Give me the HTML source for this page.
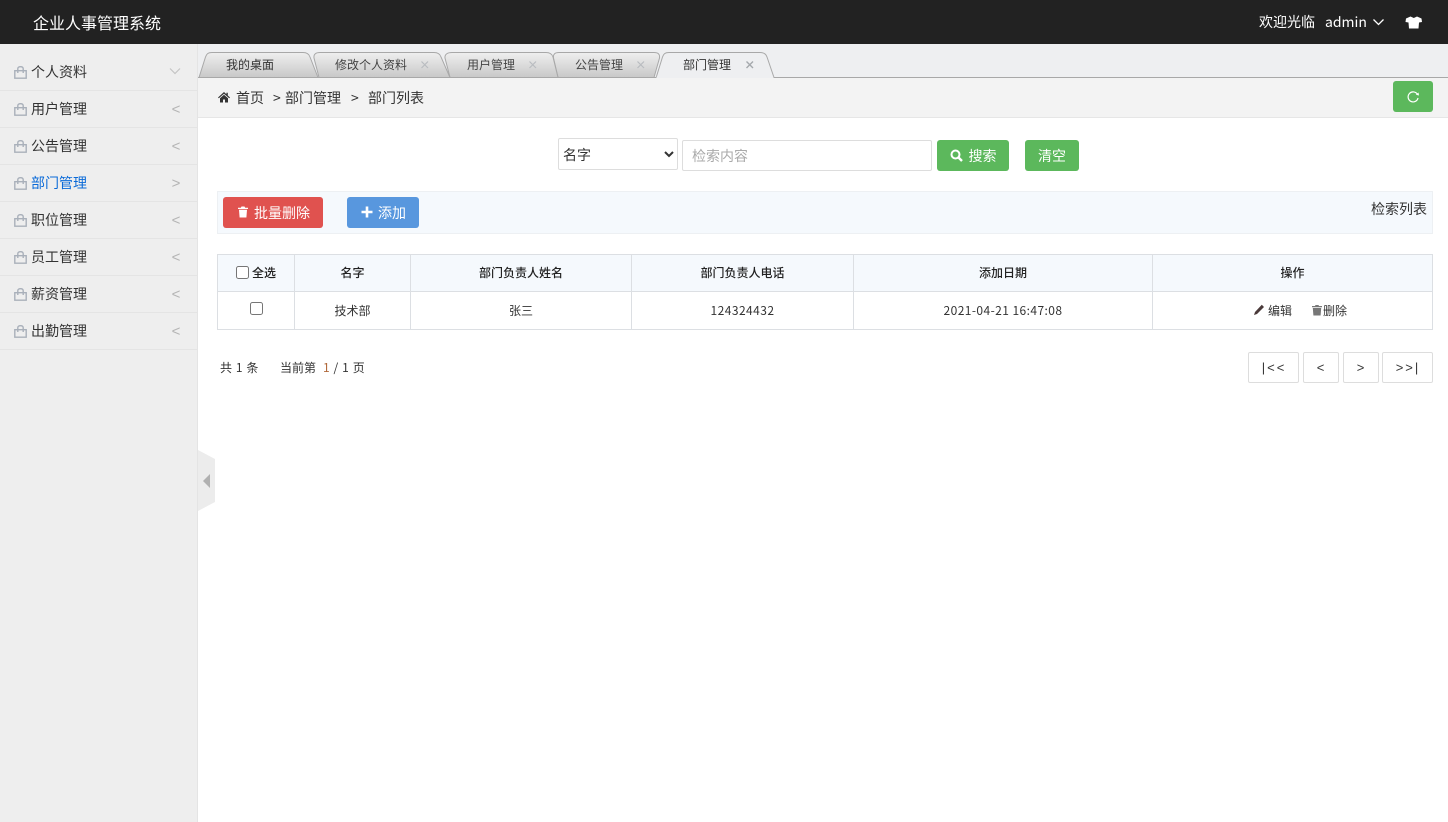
<!DOCTYPE html>
<html lang="zh"><head><meta charset="utf-8"><title>企业人事管理系统</title>
<style>
*{box-sizing:border-box}
html,body{margin:0;padding:0;width:1448px;height:822px;overflow:hidden;background:#fff}
body{position:relative;font-family:"Liberation Sans","Noto Sans CJK SC",sans-serif;color:#333;font-size:12px}
.a{position:absolute;white-space:nowrap}
.t{position:absolute;white-space:nowrap;font-family:"Noto Sans CJK SC","Liberation Sans",sans-serif;line-height:20px;height:20px}
.c{text-align:center}
.btn{position:absolute;border-radius:3px;color:#fff;font-family:"Noto Sans CJK SC",sans-serif;font-size:14px;line-height:31px;text-align:center;white-space:nowrap}
.item{position:absolute;left:0;width:197px;height:37px;border-bottom:1px solid #e4e4e4}
.item span{position:absolute;left:31px;top:8px;font:14px/20px "Noto Sans CJK SC",sans-serif;color:#333}
.item svg{position:absolute;left:14px;top:12px}
.item i{position:absolute;left:171px;top:9px;font:normal 15px/20px "Liberation Sans",sans-serif;color:#b4b4b4;width:10px;text-align:center}
.pg{position:absolute;top:352px;height:31px;border:1px solid #ddd;border-radius:2px;background:#fff;text-align:center;font:13px/29px "Liberation Sans",sans-serif;color:#333;letter-spacing:2px;padding-left:1px}
.v{position:absolute;top:254px;width:1px;height:76px;background:#dcdfe3}
.h{position:absolute;left:217px;width:1216px;height:1px;background:#dcdfe3}
input[type=checkbox]{position:absolute;margin:0;width:13px;height:13px}
</style></head><body>

<div class="a" style="left:0;top:0;width:1448px;height:44px;background:#222"></div>
<div class="t" style="left:33px;top:12px;color:#fff;font-size:16px">企业人事管理系统</div>
<div class="t" style="left:1259px;top:12px;color:#fff;font-size:14px">欢迎光临</div>
<div class="t" style="left:1325px;top:12px;color:#fff;font-size:14px">admin</div>
<svg class="a" style="left:1372px;top:18px" width="13" height="9" viewBox="0 0 13 9"><path d="M1.500 1.500L6.500 6.500L11.500 1.500" fill="none" stroke="#fff" stroke-width="1.300"/></svg>
<svg class="a" style="left:1405px;top:16px" width="18" height="13" viewBox="0 0 18 13"><path d="M5.500 0.500L1 2.500L0.500 6L3.500 6.500L4 12.500H13.500L14 6.500L17 6L16.500 2.500L12 0.500L8.800 2Z" fill="#fff"/></svg>

<!-- sidebar -->
<div class="a" style="left:0;top:44px;width:198px;height:778px;background:#eee;border-right:1px solid #e4e4e4"></div>
<div class="item" style="top:54px"><svg width="13" height="13" viewBox="0 0 13 13"><path d="M.8 4.700H12.200V12.200H.8ZM3.800 7V2.800C3.800 1.200 5 .7 6.500 .7S9.200 1.200 9.200 2.800V7" fill="none" stroke="#a9b0ba" stroke-width="1.400"/></svg><span>个人资料</span><svg style="left:169px;top:13px" width="12" height="8" viewBox="0 0 12 8"><path d="M1 1.500L6 6.500L11 1.500" fill="none" stroke="#c4c4c4" stroke-width="1.200"/></svg></div>
<div class="item" style="top:91px"><svg width="13" height="13" viewBox="0 0 13 13"><path d="M.8 4.700H12.200V12.200H.8ZM3.800 7V2.800C3.800 1.200 5 .7 6.500 .7S9.200 1.200 9.200 2.800V7" fill="none" stroke="#a9b0ba" stroke-width="1.400"/></svg><span>用户管理</span><i>&lt;</i></div>
<div class="item" style="top:128px"><svg width="13" height="13" viewBox="0 0 13 13"><path d="M.8 4.700H12.200V12.200H.8ZM3.800 7V2.800C3.800 1.200 5 .7 6.500 .7S9.200 1.200 9.200 2.800V7" fill="none" stroke="#a9b0ba" stroke-width="1.400"/></svg><span>公告管理</span><i>&lt;</i></div>
<div class="item" style="top:165px"><svg width="13" height="13" viewBox="0 0 13 13"><path d="M.8 4.700H12.200V12.200H.8ZM3.800 7V2.800C3.800 1.200 5 .7 6.500 .7S9.200 1.200 9.200 2.800V7" fill="none" stroke="#a9b0ba" stroke-width="1.400"/></svg><span style="color:#0a6ad8">部门管理</span><i>&gt;</i></div>
<div class="item" style="top:202px"><svg width="13" height="13" viewBox="0 0 13 13"><path d="M.8 4.700H12.200V12.200H.8ZM3.800 7V2.800C3.800 1.200 5 .7 6.500 .7S9.200 1.200 9.200 2.800V7" fill="none" stroke="#a9b0ba" stroke-width="1.400"/></svg><span>职位管理</span><i>&lt;</i></div>
<div class="item" style="top:239px"><svg width="13" height="13" viewBox="0 0 13 13"><path d="M.8 4.700H12.200V12.200H.8ZM3.800 7V2.800C3.800 1.200 5 .7 6.500 .7S9.200 1.200 9.200 2.800V7" fill="none" stroke="#a9b0ba" stroke-width="1.400"/></svg><span>员工管理</span><i>&lt;</i></div>
<div class="item" style="top:276px"><svg width="13" height="13" viewBox="0 0 13 13"><path d="M.8 4.700H12.200V12.200H.8ZM3.800 7V2.800C3.800 1.200 5 .7 6.500 .7S9.200 1.200 9.200 2.800V7" fill="none" stroke="#a9b0ba" stroke-width="1.400"/></svg><span>薪资管理</span><i>&lt;</i></div>
<div class="item" style="top:313px"><svg width="13" height="13" viewBox="0 0 13 13"><path d="M.8 4.700H12.200V12.200H.8ZM3.800 7V2.800C3.800 1.200 5 .7 6.500 .7S9.200 1.200 9.200 2.800V7" fill="none" stroke="#a9b0ba" stroke-width="1.400"/></svg><span>出勤管理</span><i>&lt;</i></div>

<!-- tab bar -->
<div class="a" style="left:198px;top:44px;width:1250px;height:34px;background:#eeeff1"></div>
<svg class="a" style="left:198px;top:44px" width="1250" height="34" viewBox="198 44 1250 34">
<defs><linearGradient id="g" x1="0" y1="0" x2="0" y2="1"><stop offset="0" stop-color="#efefef"/><stop offset="1" stop-color="#c8c8c8"/></linearGradient></defs>
<g fill="url(#g)" stroke="#a8a8a8" stroke-width="1">
<path d="M654 77.500H558L553.500 58C553 54 555 52.500 559 52.500H654C658 52.500 660 54 659.500 58Z"/>
<path d="M558 77.500H450L445 58C444.500 54 448 52.500 452 52.500H546C550 52.500 552 54 553 57Z"/>
<path d="M450 77.500H319L314 58C313.500 54 316 52.500 320 52.500H434C438 52.500 440 54 441 57Z"/>
<path d="M318 77.500H199L205.500 57C206.500 54 208 52.500 212 52.500H303C307 52.500 309 54 310 57Z"/>
</g>
<path d="M198 77.500H1448" stroke="#a8a8a8" stroke-width="1"/>
<path d="M656 78L662.500 57C663.500 54 665 52.500 669 52.500H760C764 52.500 766 54 767 57L774 77.500" fill="#eeeff1" stroke="#a8a8a8" stroke-width="1"/>
<path d="M656.500 77.500H773.500" stroke="#eeeff1" stroke-width="1.400"/>
</svg>
<div class="t" style="left:226px;top:55px;font-size:12px;color:#333">我的桌面</div>
<div class="t" style="left:335px;top:55px;font-size:12px;color:#444">修改个人资料</div>
<div class="t" style="left:467px;top:55px;font-size:12px;color:#444">用户管理</div>
<div class="t" style="left:575px;top:55px;font-size:12px;color:#444">公告管理</div>
<div class="t" style="left:683px;top:55px;font-size:12px;color:#333">部门管理</div>
<svg class="a" style="left:420px;top:60px" width="10" height="10" viewBox="0 0 10 10"><path d="M1.500 1.500L8 8M8 1.500L1.500 8" stroke="#b9bcc0" stroke-width="1.200"/></svg>
<svg class="a" style="left:528px;top:60px" width="10" height="10" viewBox="0 0 10 10"><path d="M1.500 1.500L8 8M8 1.500L1.500 8" stroke="#b9bcc0" stroke-width="1.200"/></svg>
<svg class="a" style="left:636px;top:60px" width="10" height="10" viewBox="0 0 10 10"><path d="M1.500 1.500L8 8M8 1.500L1.500 8" stroke="#b9bcc0" stroke-width="1.200"/></svg>
<svg class="a" style="left:745px;top:60px" width="10" height="10" viewBox="0 0 10 10"><path d="M1.500 1.500L8 8M8 1.500L1.500 8" stroke="#a4a8ac" stroke-width="1.400"/></svg>

<!-- breadcrumb -->
<div class="a" style="left:198px;top:78px;width:1250px;height:40px;background:#f3f3f3;border-bottom:1px solid #e6e6e6"></div>
<svg class="a" style="left:218px;top:92px" width="12" height="11" viewBox="0 0 12 11"><path d="M6 0L0 5.500L.8 6.300L6 1.700L11.200 6.300L12 5.500L9.800 3.500V.8H8.400V2.200ZM6 2.800L2 6.300V10.500H5V7.500H7V10.500H10V6.300Z" fill="#333"/></svg>
<div class="t" style="left:236px;top:88px;font-size:14px">首页</div>
<div class="t" style="left:273px;top:88px;font-size:14px">&gt;</div>
<div class="t" style="left:285px;top:88px;font-size:14px">部门管理</div>
<div class="t" style="left:351px;top:88px;font-size:14px">&gt;</div>
<div class="t" style="left:368px;top:88px;font-size:14px">部门列表</div>
<div class="btn" style="left:1393px;top:81px;width:40px;height:31px;background:#5cb85c"></div>
<svg class="a" style="left:1406px;top:90px" width="14" height="14" viewBox="0 0 14 14"><path d="M11.500 4.500A5 5 0 1 0 12 8" fill="none" stroke="#fff" stroke-width="1.200"/><path d="M9.800 4.800L13 5.500L12.500 2.500Z" fill="#fff"/></svg>

<!-- search -->
<select class="a" style="left:558px;top:138px;width:120px;height:32px;border:1px solid #ddd;border-radius:2px;background:#fff;font:14px 'Noto Sans CJK SC',sans-serif;color:#333;padding:2px 0 0"><option>名字</option></select>
<div class="a" style="left:682px;top:140px;width:250px;height:31px;border:1px solid #ddd;border-radius:2px;background:#fff"></div>
<div class="t" style="left:692px;top:146px;font-size:14px;color:#aaa">检索内容</div>
<div class="btn" style="left:937px;top:140px;width:72px;height:31px;background:#5cb85c;padding-left:19px;font-size:14px;line-height:32px">搜索</div>
<svg class="a" style="left:950px;top:149px" width="14" height="14" viewBox="0 0 14 14"><circle cx="5.500" cy="5.500" r="4" fill="none" stroke="#fff" stroke-width="2"/><path d="M8.500 8.500L12 12" stroke="#fff" stroke-width="2.400"/></svg>
<div class="btn" style="left:1025px;top:140px;width:54px;height:31px;background:#5cb85c;line-height:33px">清空</div>

<!-- toolbar -->
<div class="a" style="left:217px;top:191px;width:1216px;height:43px;background:#f5f9fd;border:1px solid #edf0f3"></div>
<div class="btn" style="left:223px;top:197px;width:100px;height:31px;background:#e0524f;padding-left:18px;font-size:14px;line-height:33px">批量删除</div>
<svg class="a" style="left:237px;top:206px" width="12" height="12" viewBox="0 0 12 12"><path d="M4.500 0.500H7.500L8.200 1.800H11V3H1V1.800H3.800ZM2 3.800H10L9.400 11.500H2.600Z" fill="#fff"/></svg>
<div class="btn" style="left:347px;top:197px;width:72px;height:31px;background:#5897de;padding-left:18px;font-size:14px;line-height:33px">添加</div>
<svg class="a" style="left:361px;top:206px" width="12" height="12" viewBox="0 0 12 12"><path d="M4.700 0.500H7.300V4.700H11.500V7.300H7.300V11.500H4.700V7.300H.5V4.700H4.700Z" fill="#fff"/></svg>
<div class="t" style="left:1371px;top:199px;font-size:14px;color:#333">检索列表</div>

<!-- table -->
<div class="a" style="left:218px;top:255px;width:1214px;height:36px;background:#f5f9fd"></div>
<div class="h" style="top:254px"></div><div class="h" style="top:291px"></div><div class="h" style="top:329px"></div>
<div class="v" style="left:217px"></div><div class="v" style="left:294px"></div><div class="v" style="left:410px"></div><div class="v" style="left:631px"></div><div class="v" style="left:853px"></div><div class="v" style="left:1152px"></div><div class="v" style="left:1432px"></div>
<input type="checkbox" style="left:236px;top:266px">
<div class="t" style="left:252px;top:263px;font-weight:500;color:#222">全选</div>
<div class="t c" style="left:295px;width:115px;top:263px;font-weight:500;color:#222">名字</div>
<div class="t c" style="left:411px;width:220px;top:263px;font-weight:500;color:#222">部门负责人姓名</div>
<div class="t c" style="left:632px;width:221px;top:263px;font-weight:500;color:#222">部门负责人电话</div>
<div class="t c" style="left:854px;width:298px;top:263px;font-weight:500;color:#222">添加日期</div>
<div class="t c" style="left:1153px;width:279px;top:263px;font-weight:500;color:#222">操作</div>
<input type="checkbox" style="left:250px;top:302px">
<div class="t c" style="left:295px;width:115px;top:301px">技术部</div>
<div class="t c" style="left:411px;width:220px;top:301px">张三</div>
<div class="t c" style="left:632px;width:221px;top:301px;letter-spacing:.45px">124324432</div>
<div class="t c" style="left:854px;width:298px;top:301px;letter-spacing:.42px">2021-04-21 16:47:08</div>
<svg class="a" style="left:1253px;top:304px" width="12" height="12" viewBox="0 0 12 12"><path d="M8.800 .8L11 3L4 10L1 11L2 8Z" fill="#4a3a3a"/></svg>
<div class="t" style="left:1268px;top:301px">编辑</div>
<svg class="a" style="left:1312px;top:305px" width="10" height="11" viewBox="0 0 10 11"><path d="M3.500 0H6.500L7 1H10V2.200H0V1H3ZM.8 3H9.200L8.600 10.500H1.400Z" fill="#777"/></svg>
<div class="t" style="left:1323px;top:301px">删除</div>

<!-- pagination -->
<div class="t" style="left:220px;top:358px;letter-spacing:.6px">共 1 条</div>
<div class="t" style="left:280px;top:358px">当前第</div>
<div class="t" style="left:323px;top:358px;letter-spacing:.6px"><span style="color:#b0683a">1</span> / 1 页</div>
<div class="pg" style="left:1248px;width:51px">|&lt;&lt;</div>
<div class="pg" style="left:1303px;width:36px">&lt;</div>
<div class="pg" style="left:1343px;width:36px">&gt;</div>
<div class="pg" style="left:1382px;width:51px">&gt;&gt;|</div>

<!-- collapse handle -->
<svg class="a" style="left:198px;top:450px" width="18" height="62" viewBox="0 0 18 62"><path d="M0 0L17 9V52L0 61Z" fill="#ececec"/><path d="M5 31L12 24V38Z" fill="#b0b0b0"/></svg>
</body></html>
